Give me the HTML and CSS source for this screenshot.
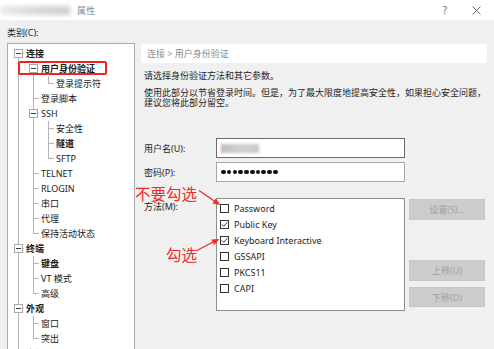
FILE: index.html
```html
<!DOCTYPE html>
<html>
  <head>
    <meta charset="utf-8"/>
    <title>属性</title>
    <link rel="stylesheet" href="styles.css">
  </head>
  <body>
    <div class="window">

      <header class="titlebar">
        <span class="title-blur"></span>
        <span class="title">属性</span>
        <span class="help">?</span>
        <svg class="close" width="9" height="9" viewBox="0 0 9 9">
          <path d="M0.5 0.5 L8.5 8.5 M8.5 0.5 L0.5 8.5" stroke="#5a5a5a" stroke-width="0.9" fill="none"/>
        </svg>
      </header>

      <div class="content">

        <aside class="side">
          <div class="caption">类别(C):</div>
          <ul class="tree">
            <li>
              <div class="row bold"><i class="exp"></i>连接</div>
              <ul>
                <li>
                  <div class="row bold marked"><i class="exp"></i>用户身份验证</div>
                  <ul>
                    <li><div class="row">登录提示符</div></li>
                  </ul>
                </li>
                <li><div class="row">登录脚本</div></li>
                <li>
                  <div class="row"><i class="exp"></i>SSH</div>
                  <ul>
                    <li><div class="row">安全性</div></li>
                    <li><div class="row bold">隧道</div></li>
                    <li><div class="row">SFTP</div></li>
                  </ul>
                </li>
                <li><div class="row">TELNET</div></li>
                <li><div class="row">RLOGIN</div></li>
                <li><div class="row">串口</div></li>
                <li><div class="row">代理</div></li>
                <li><div class="row">保持活动状态</div></li>
              </ul>
            </li>
            <li>
              <div class="row bold"><i class="exp"></i>终端</div>
              <ul>
                <li><div class="row bold">键盘</div></li>
                <li><div class="row">VT 模式</div></li>
                <li><div class="row">高级</div></li>
              </ul>
            </li>
            <li>
              <div class="row bold"><i class="exp"></i>外观</div>
              <ul>
                <li><div class="row">窗口</div></li>
                <li><div class="row">突出</div></li>
              </ul>
            </li>
            <li><div class="row bold"><i class="exp"></i>高级</div></li>
            <li><div class="row">跟踪</div></li>
          </ul>
        </aside>

        <main class="panel">
          <div class="crumb">连接 &gt; 用户身份验证</div>
          <p class="intro">请选择身份验证方法和其它参数。</p>
          <p class="note">使用此部分以节省登录时间。但是，为了最大限度地提高安全性，如果担心安全问题，<br>建议您将此部分留空。</p>

          <div class="form">
            <label class="label">用户名(U):</label>
            <div class="input focus"><span class="blurred"></span></div>
            <div></div>

            <label class="label">密码(P):</label>
            <div class="input">
              <span class="dot"></span><span class="dot"></span><span class="dot"></span><span class="dot"></span><span class="dot"></span>
              <span class="dot"></span><span class="dot"></span><span class="dot"></span><span class="dot"></span><span class="dot"></span>
            </div>
            <div></div>

            <label class="label method">方法(M):</label>
            <div class="listbox">
              <div class="item"><span class="cb"></span>Password</div>
              <div class="item"><span class="cb"><svg width="7" height="7" viewBox="0 0 7 7"><polyline points="0.8,3.4 2.7,5.3 6.3,1.2" fill="none" stroke="#333" stroke-width="1"/></svg></span>Public Key</div>
              <div class="item"><span class="cb"><svg width="7" height="7" viewBox="0 0 7 7"><polyline points="0.8,3.4 2.7,5.3 6.3,1.2" fill="none" stroke="#333" stroke-width="1"/></svg></span>Keyboard Interactive</div>
              <div class="item"><span class="cb"></span>GSSAPI</div>
              <div class="item"><span class="cb"></span>PKCS11</div>
              <div class="item"><span class="cb"></span>CAPI</div>
            </div>
            <div class="buttons">
              <button class="btn">设置(S)...</button>
              <button class="btn up">上移(U)</button>
              <button class="btn down">下移(D)</button>
            </div>
          </div>
        </main>

      </div>

      <!-- hand-drawn annotations -->
      <span class="mark mark-no">不要勾选</span>
      <span class="mark mark-yes">勾选</span>
      <svg class="arrows" width="494" height="349" viewBox="0 0 494 349">
        <line x1="199" y1="190.5" x2="215" y2="201.5" stroke="#f02a2a" stroke-width="1.4"/>
        <polygon points="220.5,205 212.5,203.6 215.9,198.4" fill="#f02a2a"/>
        <line x1="196" y1="251" x2="214" y2="241.5" stroke="#f02a2a" stroke-width="1.4"/>
        <polygon points="219.5,239 214.2,245 211.4,239.5" fill="#f02a2a"/>
      </svg>

    </div>
  </body>
</html>
```

FILE: styles.css
```css
body {
  margin: 0;
  background: #f0f0f0;
  color: #1e1e1e;
  font-family: "Noto Sans", "Noto Sans CJK SC", sans-serif;
  font-size: 9px;
  overflow: hidden;
}
.window {
  position: relative;
  width: 494px;
  height: 349px;
  overflow: hidden;
}

/* title bar */
.titlebar {
  display: flex;
  align-items: center;
  height: 20px;
  background: #fff;
}
.title-blur {
  width: 70px;
  height: 9px;
  margin-right: 7px;
  background: linear-gradient(90deg, #ececec, #d6d6d6 55%, #cfcfcf);
  filter: blur(2px);
}
.title {
  color: #8d8d8d;
}
.help {
  margin-left: auto;
  color: #6f6f6f;
  font-size: 10px;
}
.close {
  margin: 0 13px 0 25px;
}

/* main area */
.content {
  display: flex;
  padding: 0 7px;
}
.side {
  width: 128px;
  padding-top: 7px;
}
.caption {
  line-height: 12px;
}

/* category tree */
.tree {
  box-sizing: border-box;
  height: 320px;
  margin: 4px 0 0;
  padding: 2px 0 0 3px;
  list-style: none;
  background: #fff;
  border: 1px solid #acacac;
  overflow: hidden;
  color: #1a1a1a;
}
.tree ul {
  list-style: none;
  margin: 0;
  padding-left: 15px;
}
.tree li {
  position: relative;
}
.tree li::before {
  content: "";
  position: absolute;
  left: 7px;
  top: 0;
  bottom: 0;
  border-left: 1px solid #b4b4b4;
}
.tree li:last-child::before {
  bottom: auto;
  height: 8px;
}
.tree > li:first-child::before {
  top: 7px;
}
.row {
  position: relative;
  display: flex;
  align-items: center;
  height: 15px;
  padding-left: 15px;
  white-space: nowrap;
}
.row::before {
  content: "";
  position: absolute;
  left: 8px;
  top: 7px;
  width: 5px;
  border-top: 1px solid #b4b4b4;
}
.row.bold {
  font-weight: bold;
}
.exp {
  position: absolute;
  z-index: 1;
  left: 3px;
  top: 3px;
  box-sizing: border-box;
  width: 9px;
  height: 9px;
  background: #fff;
  border: 1px solid #a8a8a8;
}
.exp::after {
  content: "";
  position: absolute;
  left: 1px;
  top: 3px;
  width: 5px;
  height: 1px;
  background: #3c3c3c;
}
.row.marked::after {
  content: "";
  position: absolute;
  left: -8px;
  top: 0;
  box-sizing: border-box;
  width: 89px;
  height: 14px;
  border: 2px solid #ee2424;
  border-radius: 2px;
}

/* right panel */
.panel {
  width: 346px;
  margin-left: 6px;
  padding-top: 24px;
}
.crumb {
  height: 19px;
  line-height: 19px;
  padding-left: 6px;
  background: #fff;
  color: #8a8a8a;
}
.intro {
  margin: 7px 0 0 3px;
  line-height: 12px;
}
.note {
  margin: 6px 0 0 3px;
  line-height: 10px;
}

.form {
  display: grid;
  grid-template-columns: 68px 189px 76px;
  column-gap: 4px;
  row-gap: 4px;
  margin-top: 30px;
  padding-left: 3px;
}
.label {
  align-self: center;
}
.label.method {
  align-self: start;
  margin-top: 12px;
  padding-top: 1px;
  line-height: 16px;
}
.input {
  box-sizing: border-box;
  display: flex;
  align-items: center;
  height: 20px;
  padding-left: 4px;
  background: #fff;
  border: 1px solid #a6a6a6;
}
.input.focus {
  border-color: #6a6a6a;
}
.blurred {
  width: 38px;
  height: 9px;
  background: linear-gradient(90deg, #c9a9b0 0 2px, #c4c4c4 3px, #d0d0d0 60%, #c8c8c8);
  filter: blur(1.5px);
}
.dot {
  width: 4.6px;
  height: 4.6px;
  margin-right: 1.2px;
  border-radius: 50%;
  background: #111;
}

.listbox {
  box-sizing: border-box;
  height: 113px;
  margin-top: 12px;
  padding: 1px 0 0 3px;
  background: #fff;
  border: 1px solid #8e8f94;
}
.item {
  display: flex;
  align-items: center;
  height: 16px;
}
.cb {
  box-sizing: border-box;
  display: flex;
  align-items: center;
  justify-content: center;
  width: 9px;
  height: 9px;
  margin-right: 5px;
  background: #fff;
  border: 1px solid #333;
}

.buttons {
  display: flex;
  flex-direction: column;
  margin-top: 13px;
}
.btn {
  height: 21px;
  padding: 0;
  background: #cccccc;
  border: 1px solid #c6c6c6;
  color: #a2a2a2;
  font-family: inherit;
  font-size: 9px;
}
.btn.up {
  margin-top: 40px;
}
.btn.down {
  height: 20px;
  margin-top: 6px;
}

/* annotations */
.mark {
  position: absolute;
  color: #f02a2a;
  font-family: "Noto Sans CJK SC", sans-serif;
  font-size: 15.5px;
  line-height: 15px;
}
.mark-no {
  left: 135px;
  top: 186px;
}
.mark-yes {
  left: 166px;
  top: 247px;
}
.arrows {
  position: absolute;
  left: 0;
  top: 0;
  pointer-events: none;
}
```
